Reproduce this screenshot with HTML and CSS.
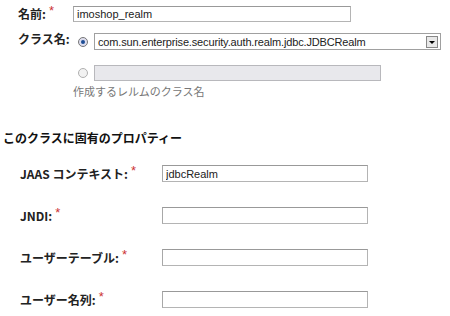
FILE: index.html
```html
<!DOCTYPE html>
<html lang="ja">

<head>
    <meta charset="UTF-8">
    <title>レルムの編集</title>
    <link rel="stylesheet" href="styles.css">
</head>

<body>
    <div class="top">
        <div class="row">
            <div class="label">名前:<span class="req">*</span></div>
            <input class="field name-field" type="text" value="imoshop_realm">
        </div>
        <div class="row class-row">
            <div class="label">クラス名:</div>
            <div class="choice">
                <span class="radio checked"></span>
                <div class="select">
                    <span class="select-text">com.sun.enterprise.security.auth.realm.jdbc.JDBCRealm</span>
                    <span class="arrow"></span>
                </div>
            </div>
        </div>
        <div class="row other-row">
            <div class="label"></div>
            <div class="choice">
                <span class="radio"></span>
                <input class="field disabled" type="text" disabled>
            </div>
        </div>
        <div class="row">
            <div class="label"></div>
            <p class="help">作成するレルムのクラス名</p>
        </div>
    </div>

    <h4 class="heading">このクラスに固有のプロパティー</h4>

    <div class="props">
        <div class="prop">
            <div class="plabel">JAAS コンテキスト:<span class="req">*</span></div>
            <input class="field pfield" type="text" value="jdbcRealm">
        </div>
        <div class="prop">
            <div class="plabel">JNDI:<span class="req">*</span></div>
            <input class="field pfield" type="text">
        </div>
        <div class="prop">
            <div class="plabel">ユーザーテーブル:<span class="req">*</span></div>
            <input class="field pfield" type="text">
        </div>
        <div class="prop">
            <div class="plabel">ユーザー名列:<span class="req">*</span></div>
            <input class="field pfield" type="text">
        </div>
    </div>
</body>

</html>
```
FILE: styles.css
```css
* {
    margin: 0;
    padding: 0;
    box-sizing: border-box;
}
body {
    background: #fff;
    color: #333;
    font-family: "Liberation Sans", "Noto Sans CJK JP", sans-serif;
    font-size: 12px;
    width: 450px;
    height: 316px;
    overflow: hidden;
}
.top {
    padding: 6px 0 0 18px;
}
.row {
    display: flex;
    align-items: center;
    height: 16px;
}
.label {
    width: 55px;
    flex: none;
    font-weight: bold;
    font-size: 12px;
    color: #222;
    font-family: "Noto Sans CJK JP", sans-serif;
    line-height: 14px;
    height: 14px;
    white-space: nowrap;
}
.req {
    color: #c33;
    font-family: "Liberation Sans", sans-serif;
    font-size: 13px;
    font-weight: normal;
    position: relative;
    top: -4px;
    margin-left: 3px;
    line-height: 0;
}
.field {
    height: 16px;
    border: 1px solid #b4b4b4;
    border-top-color: #999;
    border-left-color: #a8a8a8;
    background: #fff;
    font-family: "Liberation Sans", sans-serif;
    font-size: 11px;
    color: #222;
    padding: 0 3px;
    outline: none;
}
.name-field {
    width: 278px;
}
.class-row {
    margin-top: 11px;
    height: 17px;
    align-items: flex-start;
}
.class-row .label {
    margin-top: -1px;
}
.choice {
    display: flex;
    align-items: center;
}
.radio {
    width: 10px;
    height: 10px;
    border-radius: 50%;
    border: 1px solid #b0b0b0;
    background: #f2f2f2;
    margin: 0 6px 0 5px;
    position: relative;
}
.radio.checked {
    border-color: #777;
    background: #dde;
}
.radio.checked::after {
    content: "";
    position: absolute;
    left: 2px;
    top: 2px;
    width: 4px;
    height: 4px;
    border-radius: 50%;
    background: #1d4d94;
}
.select {
    width: 347px;
    height: 17px;
    border: 1px solid #a0a0a0;
    display: flex;
    align-items: center;
    justify-content: space-between;
    padding: 0 2px 0 3px;
}
.select-text {
    font-size: 11px;
    color: #222;
    letter-spacing: -0.15px;
}
.arrow {
    width: 12px;
    height: 12px;
    border: 1px solid #888;
    background: #e8e8e8;
    position: relative;
}
.arrow::after {
    content: "";
    position: absolute;
    left: 2px;
    top: 4px;
    border-left: 3px solid transparent;
    border-right: 3px solid transparent;
    border-top: 3px solid #000;
}
.other-row {
    margin-top: 15px;
}
.disabled {
    width: 287px;
    background: #e8e8ec;
    border-color: #b8b8bc;
}
.help {
    font-family: "Noto Sans CJK JP", sans-serif;
    font-size: 11px;
    color: #777;
    line-height: 13px;
    margin-top: 5px;
}
.heading {
    font-family: "Noto Sans CJK JP", sans-serif;
    font-size: 12px;
    font-weight: bold;
    color: #111;
    margin: 34px 0 0 3px;
    line-height: 14px;
}
.props {
    padding: 20px 0 0 20px;
}
.prop {
    display: flex;
    align-items: center;
    height: 17px;
    margin-bottom: 25px;
}
.prop:last-child {
    margin-bottom: 0;
}
.plabel {
    width: 142px;
    flex: none;
    font-family: "Noto Sans CJK JP", sans-serif;
    font-weight: bold;
    font-size: 12px;
    color: #222;
    line-height: 14px;
    white-space: nowrap;
}
.pfield {
    width: 206px;
    height: 17px;
}
```
